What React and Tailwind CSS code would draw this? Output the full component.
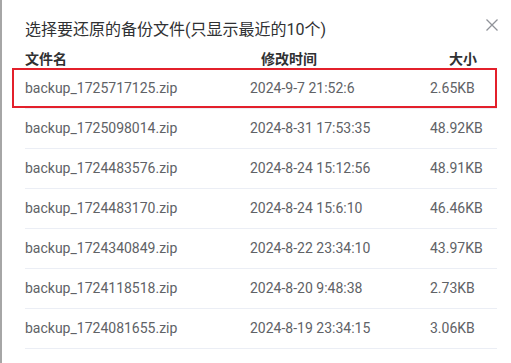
const backups = [
  { name: "backup_1725717125.zip", time: "2024-9-7 21:52:6", size: "2.65KB" },
  { name: "backup_1725098014.zip", time: "2024-8-31 17:53:35", size: "48.92KB" },
  { name: "backup_1724483576.zip", time: "2024-8-24 15:12:56", size: "48.91KB" },
  { name: "backup_1724483170.zip", time: "2024-8-24 15:6:10", size: "46.46KB" },
  { name: "backup_1724340849.zip", time: "2024-8-22 23:34:10", size: "43.97KB" },
  { name: "backup_1724118518.zip", time: "2024-8-20 9:48:38", size: "2.73KB" },
  { name: "backup_1724081655.zip", time: "2024-8-19 23:34:15", size: "3.06KB" },
];

export default function App() {
  return (
    <div
      className="relative w-[511px] h-[363px] overflow-hidden bg-white border-l-2 border-[#a6a6a6] pl-[23px] pr-[14px]"
      style={{ fontFamily: 'Roboto, "Noto Sans CJK SC", sans-serif' }}
    >
      <h2 className="pt-[18px] text-[16px] leading-[24px] text-[#303133]">
        选择要还原的备份文件(只显示最近的10个)
      </h2>

      <button className="absolute top-[19px] right-[13px] text-[#909399]">
        <svg width="12" height="12" viewBox="0 0 12 12" fill="none" stroke="currentColor" strokeWidth="1.3">
          <path d="M0.5 0.5L11.5 11.5M11.5 0.5L0.5 11.5" />
        </svg>
      </button>

      <div className="mt-[7px] flex h-[20px] items-center text-[14px] font-semibold text-[#303133]">
        <div className="w-[225px]">文件名</div>
        <div className="w-[180px] pl-[11px]">修改时间</div>
        <div className="pl-[19px]">大小</div>
      </div>

      <div>
        {backups.map((b) => (
          <div
            key={b.name}
            className="flex h-[40px] items-center border-b border-[#ebeef5] text-[14px] text-[#606266]"
          >
            <div className="w-[225px]">{b.name}</div>
            <div className="w-[180px]">{b.time}</div>
            <div>{b.size}</div>
          </div>
        ))}
      </div>

      <div className="pointer-events-none absolute left-[10px] top-[68px] h-[40px] w-[485px] border-2 border-[#e3202b]" />
    </div>
  );
}
